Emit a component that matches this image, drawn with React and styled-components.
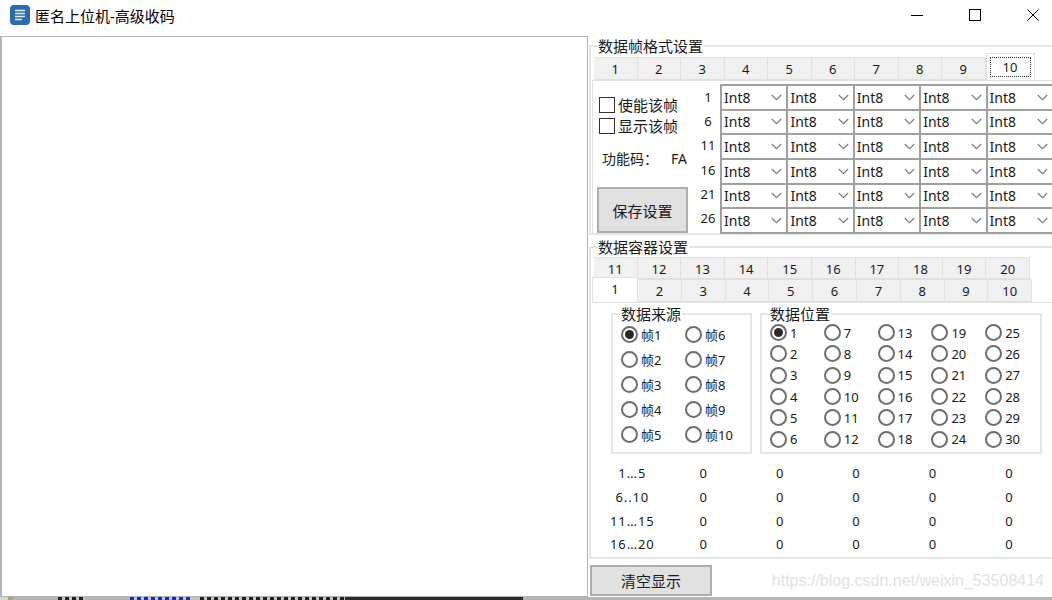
import React from "react";
import styled, { createGlobalStyle } from "styled-components";

const GlobalStyle = createGlobalStyle`
  html, body {
    margin: 0;
    padding: 0;
    background: #fff;
  }
  * {
    box-sizing: border-box;
  }
`;

const FONT = `"Noto Sans", "Noto Sans CJK SC", sans-serif`;

const Win = styled.div`
  width: 1052px;
  height: 600px;
  overflow: hidden;
  display: flex;
  flex-direction: column;
  background: #fff;
  color: #1a1a1a;
  font-family: ${FONT};
  font-size: 13px;
`;

const TitleBar = styled.div`
  height: 36px;
  flex: none;
  display: flex;
  align-items: center;
  padding: 0 13px 6px 10px;
`;

const Title = styled.span`
  margin-left: 5px;
  font-size: 15px;
  color: #000;
`;

const Controls = styled.div`
  margin-left: auto;
  display: flex;
  align-items: center;
  gap: 46px;
`;

const Body = styled.div`
  height: 561px;
  flex: none;
  display: flex;
`;

const TextArea = styled.div`
  width: 588px;
  flex: none;
  background: #fff;
  border: 1px solid #b4b4bc;
  border-left-width: 2px;
`;

const Side = styled.div`
  flex: 1;
  min-width: 0;
  display: flex;
  flex-direction: column;
  overflow: hidden;
`;

const Group = styled.fieldset`
  margin: 0 -3px 0 1px;
  margin-top: ${(p) => (p.$first ? 0 : 2)}px;
  padding: 0 0 0 3px;
  min-width: 0;
  flex: none;
  height: ${(p) => p.$h}px;
  border: 2px solid #e6e6e6;
`;

const GroupTitle = styled.legend`
  margin-left: 4px;
  padding: 0 1px 0 0;
  height: 20px;
  line-height: 20px;
  font-size: 15px;
`;

const TabRow = styled.div`
  display: flex;
  height: ${(p) => p.$h}px;
  align-items: flex-end;
  margin-left: ${(p) => p.$ml || 0}px;
`;

const Tab = styled.div`
  width: ${(p) => p.$w}px;
  height: ${(p) => p.$h}px;
  flex: none;
  display: flex;
  align-items: center;
  justify-content: center;
  padding: ${(p) => (p.$on ? 0 : 1)}px 0 ${(p) => p.$pb || 0}px;
  background: ${(p) => (p.$on ? "#fff" : "#f0f0f0")};
  border: 1px solid #e0e0e0;
  border-left-width: ${(p) => (p.$on ? 1 : 0)}px;
  border-bottom-width: ${(p) => (p.$on ? 0 : 1)}px;
  font-size: 13px;
`;

const FocusBox = styled.span`
  width: 41px;
  height: 20px;
  display: flex;
  align-items: center;
  justify-content: center;
  border: 1px dotted #333;
`;

const FormatPane = styled.div`
  margin-left: -2px;
  height: 153px;
  display: flex;
  border-left: 1px solid #e0e0e0;
  border-top: 1px solid #e0e0e0;
`;

const FormatSide = styled.div`
  width: 103px;
  flex: none;
  padding: 13px 0 0 6px;
  display: flex;
  flex-direction: column;
`;

const CheckLine = styled.label`
  display: flex;
  align-items: center;
  gap: 3px;
  height: 21px;
  font-size: 15px;
`;

const CheckBox = styled.span`
  width: 16px;
  height: 16px;
  flex: none;
  border: 1px solid #333;
  background: #fff;
`;

const CodeLine = styled.div`
  display: flex;
  justify-content: space-between;
  align-items: center;
  margin-top: 11px;
  padding: 0 9px 0 3px;
  font-size: 14px;
  height: 22px;
`;

const CodeValue = styled.span`
  font-size: 14px;
`;

const SaveButton = styled.div`
  margin: 18px 0 0 -2px;
  width: 91px;
  height: 46px;
  background: #e1e1e1;
  border: 2px solid #adadad;
  display: flex;
  align-items: center;
  justify-content: center;
  font-size: 15px;
`;

const RowNums = styled.div`
  width: 24px;
  flex: none;
  padding-top: 4px;
  display: grid;
  grid-auto-rows: 24.2px;
  height: 150px;
  text-align: center;
`;

const RowNum = styled.span`
  line-height: 24px;
  font-size: 13px;
`;

const SelectGrid = styled.div`
  width: 335px;
  height: 150px;
  margin-top: 3px;
  flex: none;
  display: grid;
  grid-template-columns: repeat(5, 66.4px);
  grid-auto-rows: 24.66px;
  border-top: 2px solid #a0a0a0;
  border-left: 2px solid #a0a0a0;
`;

const SelectCell = styled.div`
  display: flex;
  align-items: center;
  justify-content: space-between;
  padding: 0 4px 0 2px;
  border-right: 2px solid #a0a0a0;
  border-bottom: 2px solid #a0a0a0;
  background: #fff;
  font-size: 14px;
`;

const ContainerPane = styled.div`
  margin-left: -2px;
  border-top: 1px solid #e0e0e0;
  padding: 11px 0 0 19px;
`;

const PickRow = styled.div`
  display: flex;
  gap: 8px;
`;

const SubGroup = styled.fieldset`
  margin: -10px 0 0;
  padding: 0;
  width: ${(p) => p.$w}px;
  height: 150px;
  min-width: 0;
  flex: none;
  border: 2px solid #e6e6e6;
`;

const SubTitle = styled.legend`
  margin-left: 8px;
  padding: 0 1px 0 0;
  height: 20px;
  line-height: 20px;
  font-size: 15px;
`;

const RadioGrid = styled.div`
  display: grid;
  grid-template-columns: repeat(${(p) => p.$cols}, ${(p) => p.$colW}px);
  grid-auto-flow: column;
  grid-template-rows: repeat(${(p) => p.$rows}, ${(p) => p.$rowH}px);
  margin: -2px 0 0 8px;
`;

const RadioLine = styled.label`
  display: flex;
  align-items: center;
  gap: 3px;
  font-size: 13px;
  white-space: nowrap;
`;

const RadioDot = styled.span`
  width: 17px;
  height: 17px;
  flex: none;
  border-radius: 50%;
  border: 2px solid #6e6e6e;
  background: #fff;
  display: flex;
  align-items: center;
  justify-content: center;
  &::after {
    content: "";
    display: ${(p) => (p.$on ? "block" : "none")};
    width: 9px;
    height: 9px;
    border-radius: 50%;
    background: #2a2a2a;
  }
`;

const Readout = styled.div`
  margin: 8px 0 0 -11.5px;
  display: grid;
  grid-template-columns: 65.6px repeat(5, 76.4px);
  grid-auto-rows: 23.8px;
  text-align: center;
  font-size: 13px;
  line-height: 23.8px;
`;

const ReadoutLabel = styled.span`
  letter-spacing: 0.9px;
`;

const Footer = styled.div`
  margin-top: 6px;
  display: flex;
  align-items: center;
  justify-content: space-between;
  padding: 0 8px 0 2px;
  height: 31px;
  flex: none;
`;

const ClearButton = styled.div`
  width: 122px;
  height: 31px;
  background: #e1e1e1;
  border: 2px solid #adadad;
  display: flex;
  align-items: center;
  justify-content: center;
  font-size: 15px;
`;

const Watermark = styled.span`
  font-family: "Liberation Sans", sans-serif;
  font-size: 16px;
  color: #e2e2e2;
`;

const Strip = styled.div`
  height: 3px;
  flex: none;
  display: flex;
  background: #b4b4b4;
`;

const StripPart = styled.span`
  width: ${(p) => p.$w}px;
  flex: none;
  background: ${(p) =>
    p.$dash
      ? `repeating-linear-gradient(90deg, ${p.$c} 0 4px, #c4c4c4 4px 7px)`
      : p.$c};
`;

const AppIcon = () => (
  <svg width="20" height="20" viewBox="0 0 20 20">
    <rect width="20" height="20" rx="4" fill="#2c6cb0" />
    <path d="M5 5.5h10M5 8.5h10M5 11.5h10M5 14.5h7" stroke="#e4edf6" strokeWidth="1.5" />
  </svg>
);

const Chevron = () => (
  <svg width="11" height="7" viewBox="0 0 11 7" fill="none">
    <path d="M.8 1l4.7 4.7L10.2 1" stroke="#7a7a7a" strokeWidth="1.1" />
  </svg>
);

const range = (a, n) => Array.from({ length: n }, (_, i) => a + i);

const stripParts = [
  { w: 8, c: "#d8d8d8" }, { w: 5, c: "#a8a860" }, { w: 45, c: "#b4b4b4" },
  { w: 27, c: "#222", dash: true }, { w: 45, c: "#b4b4b4" },
  { w: 60, c: "#1c28c8", dash: true }, { w: 10, c: "#c4c4c4" },
  { w: 145, c: "#222", dash: true }, { w: 178, c: "#2b2b2b" },
];

export default function App() {
  return (
    <Win>
      <GlobalStyle />
      <TitleBar>
        <AppIcon />
        <Title>匿名上位机-高级收码</Title>
        <Controls>
          <svg width="12" height="12" viewBox="0 0 12 12">
            <path d="M0 6.5h12" stroke="#000" />
          </svg>
          <svg width="12" height="12" viewBox="0 0 12 12" fill="none">
            <rect x=".5" y=".5" width="11" height="11" stroke="#000" />
          </svg>
          <svg width="12" height="12" viewBox="0 0 12 12">
            <path d="M.4.4l11.2 11.2M11.6.4L.4 11.6" stroke="#000" />
          </svg>
        </Controls>
      </TitleBar>
      <Body>
        <TextArea />
        <Side>
          <Group $first $h={199}>
            <GroupTitle>数据帧格式设置</GroupTitle>
            <TabRow $h={24}>
              {range(1, 10).map((n) =>
                n === 10 ? (
                  <Tab key={n} $w={49} $h={27} $on>
                    <FocusBox>{n}</FocusBox>
                  </Tab>
                ) : (
                  <Tab key={n} $w={43.5} $h={23}>{n}</Tab>
                )
              )}
            </TabRow>
            <FormatPane>
              <FormatSide>
                <CheckLine><CheckBox />使能该帧</CheckLine>
                <CheckLine><CheckBox />显示该帧</CheckLine>
                <CodeLine>
                  <span>功能码：</span>
                  <CodeValue>FA</CodeValue>
                </CodeLine>
                <SaveButton>保存设置</SaveButton>
              </FormatSide>
              <RowNums>
                {[1, 6, 11, 16, 21, 26].map((n) => <RowNum key={n}>{n}</RowNum>)}
              </RowNums>
              <SelectGrid>
                {range(0, 30).map((i) => (
                  <SelectCell key={i}>Int8<Chevron /></SelectCell>
                ))}
              </SelectGrid>
            </FormatPane>
          </Group>
          <Group $h={322}>
            <GroupTitle>数据容器设置</GroupTitle>
            <TabRow $h={22}>
              {range(11, 10).map((n) => <Tab key={n} $w={43.6} $h={22}>{n}</Tab>)}
            </TabRow>
            <TabRow $h={23} $ml={-2}>
              <Tab $w={46} $h={25} $on $pb={3}>1</Tab>
              {range(2, 9).map((n) => <Tab key={n} $w={43.8} $h={23}>{n}</Tab>)}
            </TabRow>
            <ContainerPane>
              <PickRow>
                <SubGroup $w={141}>
                  <SubTitle>数据来源</SubTitle>
                  <RadioGrid $cols={2} $rows={5} $colW={64} $rowH={25}>
                    {range(1, 10).map((n) => (
                      <RadioLine key={n}><RadioDot $on={n === 1} />帧{n}</RadioLine>
                    ))}
                  </RadioGrid>
                </SubGroup>
                <SubGroup $w={282}>
                  <SubTitle>数据位置</SubTitle>
                  <RadioGrid $cols={5} $rows={6} $colW={53.8} $rowH={21.3}>
                    {range(1, 30).map((n) => (
                      <RadioLine key={n}><RadioDot $on={n === 1} />{n}</RadioLine>
                    ))}
                  </RadioGrid>
                </SubGroup>
              </PickRow>
              <Readout>
                {["1…5", "6..10", "11…15", "16…20"].map((label) => (
                  <React.Fragment key={label}>
                    <ReadoutLabel>{label}</ReadoutLabel>
                    {range(0, 5).map((i) => <span key={i}>0</span>)}
                  </React.Fragment>
                ))}
              </Readout>
            </ContainerPane>
          </Group>
          <Footer>
            <ClearButton>清空显示</ClearButton>
            <Watermark>https://blog.csdn.net/weixin_53508414</Watermark>
          </Footer>
        </Side>
      </Body>
      <Strip>
        {stripParts.map((s, i) => <StripPart key={i} $w={s.w} $c={s.c} $dash={s.dash} />)}
      </Strip>
    </Win>
  );
}
